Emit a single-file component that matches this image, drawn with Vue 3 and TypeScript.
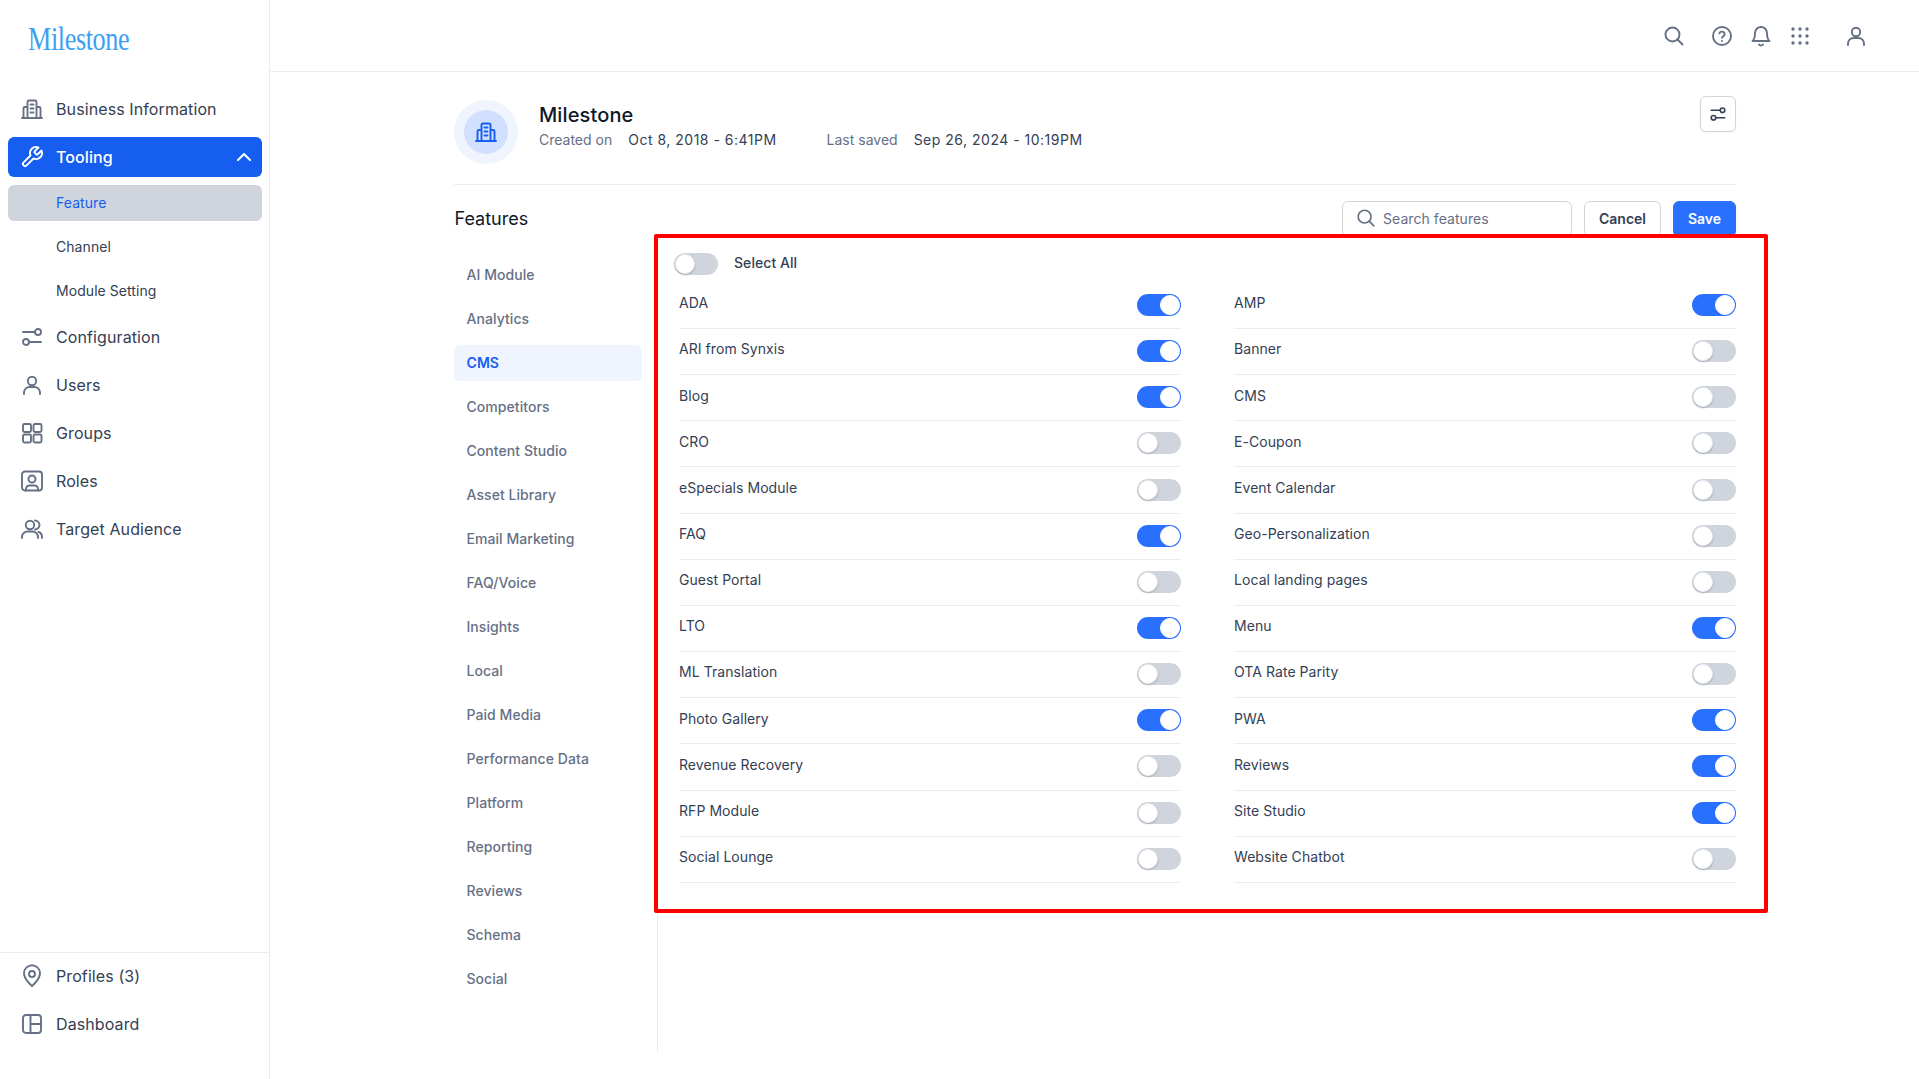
<script setup lang="ts">
import { reactive } from "vue";

const icons: Record<string, string> = {
  building:
    '<path d="M2 21h20M7.5 21V5A1.5 1.5 0 0 1 9 3.5h6A1.5 1.5 0 0 1 16.5 5v16M7.5 10H5a1.5 1.5 0 0 0-1.5 1.5V21M16.5 10H19a1.5 1.5 0 0 1 1.5 1.5V21M10.5 7.5h3M10.5 11.5h3M10.5 15.5h3"/>',
  wrench:
    '<path d="M14.7 6.3a1 1 0 0 0 0 1.4l1.6 1.6a1 1 0 0 0 1.4 0l3.77-3.77a6 6 0 0 1-7.94 7.94l-6.91 6.91a2.12 2.12 0 0 1-3-3l6.91-6.91a6 6 0 0 1 7.94-7.94l-3.76 3.76z"/>',
  sliders:
    '<circle cx="18" cy="7" r="3"/><circle cx="6" cy="17" r="3"/><path d="M3 7h12M9 17h12"/>',
  user: '<circle cx="12" cy="8" r="4.2"/><path d="M4 21v-1.5A5.5 5.5 0 0 1 9.5 14h5a5.5 5.5 0 0 1 5.5 5.5V21"/>',
  grid: '<rect x="3" y="3" width="8" height="8" rx="1.5"/><rect x="13.5" y="3" width="8" height="8" rx="1.5"/><rect x="3" y="13.5" width="8" height="8" rx="1.5"/><rect x="13.5" y="13.5" width="8" height="8" rx="1.5"/>',
  roles:
    '<rect x="2" y="2.5" width="20" height="19" rx="3"/><circle cx="12" cy="10" r="3.5"/><path d="M6 21.5V20a3.5 3.5 0 0 1 3.5-3.5h5A3.5 3.5 0 0 1 18 20v1.5"/>',
  users:
    '<circle cx="10" cy="8" r="4.2"/><path d="M2 21v-1a5.5 5.5 0 0 1 5.5-5.5h5A5.5 5.5 0 0 1 18 20v1M15 3.5a4.5 4.5 0 0 1 0 9M18.5 15a5 5 0 0 1 3.5 4.7V21"/>',
  pin: '<path d="M12 22s8-6.6 8-12.7a8 8 0 0 0-16 0C4 15.4 12 22 12 22z"/><circle cx="12" cy="10" r="3"/>',
  layout:
    '<rect x="3" y="3" width="18" height="18" rx="3"/><path d="M10.5 3v18M10.5 12H21"/>',
  search: '<circle cx="10.5" cy="10.5" r="7"/><path d="M20.5 20.5l-5-5"/>',
  help: '<circle cx="12" cy="12" r="9"/><path d="M9.4 9.3a2.7 2.7 0 0 1 5.2.9c0 1.8-2.6 2.4-2.6 3.6"/><path d="M12 17h.01"/>',
  bell: '<path d="M18 9A6 6 0 0 0 6 9c0 6-2.5 8-2.5 8h17S18 15 18 9z"/><path d="M10 20.5a2.4 2.4 0 0 0 4 0"/>',
  chevron: '<path d="M6 15l6-6 6 6"/>',
};

const topNav = [
  { label: "Business Information", icon: "building" },
  { label: "Tooling", icon: "wrench", active: true },
];
const subNav = [
  { label: "Feature", active: true },
  { label: "Channel" },
  { label: "Module Setting" },
];
const restNav = [
  { label: "Configuration", icon: "sliders" },
  { label: "Users", icon: "user" },
  { label: "Groups", icon: "grid" },
  { label: "Roles", icon: "roles" },
  { label: "Target Audience", icon: "users" },
];
const bottomNav = [
  { label: "Profiles (3)", icon: "pin" },
  { label: "Dashboard", icon: "layout" },
];

const categories = [
  "AI Module",
  "Analytics",
  "CMS",
  "Competitors",
  "Content Studio",
  "Asset Library",
  "Email Marketing",
  "FAQ/Voice",
  "Insights",
  "Local",
  "Paid Media",
  "Performance Data",
  "Platform",
  "Reporting",
  "Reviews",
  "Schema",
  "Social",
];

const features = reactive([
  { name: "ADA", on: true },
  { name: "AMP", on: true },
  { name: "ARI from Synxis", on: true },
  { name: "Banner", on: false },
  { name: "Blog", on: true },
  { name: "CMS", on: false },
  { name: "CRO", on: false },
  { name: "E-Coupon", on: false },
  { name: "eSpecials Module", on: false },
  { name: "Event Calendar", on: false },
  { name: "FAQ", on: true },
  { name: "Geo-Personalization", on: false },
  { name: "Guest Portal", on: false },
  { name: "Local landing pages", on: false },
  { name: "LTO", on: true },
  { name: "Menu", on: true },
  { name: "ML Translation", on: false },
  { name: "OTA Rate Parity", on: false },
  { name: "Photo Gallery", on: true },
  { name: "PWA", on: true },
  { name: "Revenue Recovery", on: false },
  { name: "Reviews", on: true },
  { name: "RFP Module", on: false },
  { name: "Site Studio", on: true },
  { name: "Social Lounge", on: false },
  { name: "Website Chatbot", on: false },
]);

const selectAll = reactive({ on: false });
</script>

<template>
  <div class="app">
    <aside class="sidebar">
      <div class="logo"><span>Milestone</span></div>
      <nav class="nav">
        <a v-for="item in topNav" :key="item.label" class="nav-item" :class="{ active: item.active }">
          <svg class="icon" viewBox="0 0 24 24" v-html="icons[item.icon]"></svg>
          <span>{{ item.label }}</span>
          <svg v-if="item.active" class="chevron" viewBox="0 0 24 24" v-html="icons.chevron"></svg>
        </a>
        <a v-for="item in subNav" :key="item.label" class="sub-item" :class="{ active: item.active }">{{ item.label }}</a>
        <a v-for="item in restNav" :key="item.label" class="nav-item">
          <svg class="icon" viewBox="0 0 24 24" v-html="icons[item.icon]"></svg>
          <span>{{ item.label }}</span>
        </a>
      </nav>
      <nav class="nav nav-bottom">
        <a v-for="item in bottomNav" :key="item.label" class="nav-item">
          <svg class="icon" viewBox="0 0 24 24" v-html="icons[item.icon]"></svg>
          <span>{{ item.label }}</span>
        </a>
      </nav>
    </aside>

    <div class="main">
      <header class="topbar">
        <svg class="icon" viewBox="0 0 24 24" v-html="icons.search"></svg>
        <svg class="icon" viewBox="0 0 24 24" v-html="icons.help"></svg>
        <svg class="icon" viewBox="0 0 24 24" v-html="icons.bell"></svg>
        <svg class="icon apps" viewBox="0 0 24 24">
          <template v-for="y in [5, 12, 19]" :key="y">
            <circle v-for="x in [5, 12, 19]" :key="x" :cx="x" :cy="y" r="1.7" />
          </template>
        </svg>
        <svg class="icon" viewBox="0 0 24 24" v-html="icons.user"></svg>
      </header>

      <div class="content">
        <section class="page-head">
          <div class="avatar">
            <div class="avatar-inner">
              <svg class="icon" viewBox="0 0 24 24" v-html="icons.building"></svg>
            </div>
          </div>
          <div class="head-text">
            <h1>Milestone</h1>
            <p>
              <span class="muted">Created on</span><span class="date">Oct 8, 2018 - 6:41PM</span>
              <span class="muted saved">Last saved</span><span class="date">Sep 26, 2024 - 10:19PM</span>
            </p>
          </div>
          <button class="settings">
            <svg viewBox="0 0 24 24" v-html="icons.sliders"></svg>
          </button>
        </section>

        <section class="toolbar">
          <h2>Features</h2>
          <label class="search">
            <svg class="icon" viewBox="0 0 24 24" v-html="icons.search"></svg>
            <input type="text" placeholder="Search features" />
          </label>
          <button class="btn cancel">Cancel</button>
          <button class="btn primary">Save</button>
        </section>

        <section class="body">
          <ul class="categories">
            <li v-for="c in categories" :key="c" :class="{ active: c === 'CMS' }">{{ c }}</li>
          </ul>
          <div class="panel">
            <div class="select-all">
              <button class="toggle" :class="{ on: selectAll.on }" @click="selectAll.on = !selectAll.on"></button>
              <span>Select All</span>
            </div>
            <div class="feature-grid">
              <div v-for="f in features" :key="f.name" class="feature-row">
                <span>{{ f.name }}</span>
                <button class="toggle" :class="{ on: f.on }" @click="f.on = !f.on"></button>
              </div>
            </div>
          </div>
          <div class="highlight"></div>
        </section>
      </div>
    </div>
  </div>
</template>

<style>
html,
body {
  margin: 0;
  background: #fff;
}
</style>

<style scoped>
.app {
  display: flex;
  height: 1079px;
  overflow: hidden;
  font-family: Inter, "Noto Sans", sans-serif;
  color: #344054;
  background: #fff;
}

.icon {
  width: 24px;
  height: 24px;
  flex: none;
  fill: none;
  stroke: #667085;
  stroke-width: 1.9;
  stroke-linecap: round;
  stroke-linejoin: round;
}

.sidebar {
  width: 270px;
  flex: none;
  box-sizing: border-box;
  border-right: 1px solid #eaecf0;
  display: flex;
  flex-direction: column;
}

.logo {
  height: 89px;
  padding: 19px 0 0 28px;
  box-sizing: border-box;
  overflow: hidden;
}

.logo span {
  display: inline-block;
  font-family: "Liberation Serif", serif;
  font-size: 34px;
  line-height: 40px;
  color: #3d9fef;
  transform: scaleX(0.77);
  transform-origin: left center;
  letter-spacing: -0.5px;
}

.nav {
  display: flex;
  flex-direction: column;
  gap: 8px;
  padding: 0 7px 0 8px;
}

.nav-bottom {
  margin-top: auto;
  border-top: 1px solid #eaecf0;
  padding-top: 3px;
  padding-bottom: 35px;
}

.nav-item {
  height: 40px;
  display: flex;
  align-items: center;
  gap: 12px;
  padding: 0 12px;
  border-radius: 6px;
  font-size: 16px;
  letter-spacing: 0.1px;
}

.nav-item.active {
  background: #155eef;
  color: #fff;
  font-weight: 500;
}

.nav-item.active .icon {
  stroke: #fff;
}

.chevron {
  width: 24px;
  height: 24px;
  margin-left: auto;
  margin-right: -6px;
  fill: none;
  stroke: #fff;
  stroke-width: 2;
  stroke-linecap: round;
  stroke-linejoin: round;
}

.sub-item {
  height: 36px;
  line-height: 36px;
  padding-left: 48px;
  border-radius: 6px;
  font-size: 14px;
  letter-spacing: 0.06px;
}

.sub-item.active {
  background: #d0d5dd;
  color: #155eef;
}

.main {
  flex: 1;
  min-width: 0;
}

.topbar {
  height: 72px;
  box-sizing: border-box;
  border-bottom: 1px solid #eaecf0;
  display: flex;
  align-items: center;
  justify-content: flex-end;
  gap: 15px;
  padding-right: 51px;
}

.topbar .icon:nth-child(1) {
  margin-right: 9px;
}

.topbar .icon:nth-child(4) {
  margin-right: 17px;
}

.apps {
  stroke: none;
  fill: #667085;
}

.content {
  padding: 28px 183px 0 184px;
}

.page-head {
  display: flex;
  align-items: flex-start;
  padding-bottom: 20px;
  border-bottom: 1px solid #eaecf0;
}

.avatar {
  width: 64px;
  height: 64px;
  border-radius: 50%;
  background: #eff4ff;
  display: flex;
  align-items: center;
  justify-content: center;
}

.avatar-inner {
  width: 44px;
  height: 44px;
  border-radius: 50%;
  background: #d1e0ff;
  display: flex;
  align-items: center;
  justify-content: center;
}

.avatar-inner .icon {
  stroke: #155eef;
}

.head-text {
  margin-left: 21px;
  padding-top: 2px;
}

.head-text h1 {
  margin: 0;
  font-size: 20px;
  line-height: 26px;
  font-weight: 500;
  letter-spacing: 0.12px;
  color: #101828;
}

.head-text p {
  margin: 2px 0 0;
  font-size: 14px;
  line-height: 20px;
}

.muted {
  color: #667085;
}

.date {
  margin-left: 16px;
  letter-spacing: 0.5px;
}

.saved {
  margin-left: 50px;
}

.settings {
  margin-left: auto;
  margin-top: -4px;
  width: 36px;
  height: 36px;
  padding: 8px;
  box-sizing: border-box;
  border: 1px solid #d0d5dd;
  border-radius: 6px;
  background: #fff;
  box-shadow: 0 1px 2px rgba(16, 24, 40, 0.05);
}

.settings svg {
  display: block;
  width: 18px;
  height: 18px;
  fill: none;
  stroke: #344054;
  stroke-width: 2.2;
  stroke-linecap: round;
}

.toolbar {
  display: flex;
  align-items: center;
  gap: 12px;
  margin-top: 16px;
}

.toolbar h2 {
  margin: -2px auto 0 0.5px;
  font-size: 18px;
  font-weight: 400;
  color: #101828;
}

.search {
  width: 230px;
  height: 36px;
  box-sizing: border-box;
  display: flex;
  align-items: center;
  gap: 6px;
  padding: 0 12px 2px;
  border: 1px solid #d0d5dd;
  border-radius: 6px;
}

.search .icon {
  width: 22px;
  height: 22px;
  stroke-width: 1.8;
}

.search input {
  flex: 1;
  min-width: 0;
  border: 0;
  outline: 0;
  padding: 0;
  font: 14px Inter, sans-serif;
  letter-spacing: 0.06px;
  color: #344054;
  background: transparent;
}

.search input::placeholder {
  color: #667085;
  opacity: 1;
}

.btn {
  height: 36px;
  padding: 0 0 2px;
  box-sizing: border-box;
  border: 1px solid #d0d5dd;
  border-radius: 6px;
  background: #fff;
  font: 600 14px Inter, sans-serif;
  color: #344054;
}

.cancel {
  width: 77px;
}

.btn.primary {
  width: 63px;
  background: #2970ff;
  border-color: #2970ff;
  color: #fff;
}

.body {
  position: relative;
  display: flex;
  margin-top: 16px;
}

.categories {
  list-style: none;
  margin: 0;
  width: 204px;
  box-sizing: border-box;
  padding: 4px 15px 56px 0;
  border-right: 1px solid #eaecf0;
  display: flex;
  flex-direction: column;
  gap: 8px;
}

.categories li {
  height: 36px;
  line-height: 36px;
  padding-left: 12.5px;
  border-radius: 6px;
  font-size: 14px;
  font-weight: 500;
  letter-spacing: 0.06px;
  color: #667085;
}

.categories li.active {
  background: #eff4ff;
  color: #155eef;
  font-weight: 600;
}

.panel {
  flex: 1;
  padding-left: 16px;
}

.select-all {
  display: flex;
  align-items: center;
  gap: 16px;
  height: 22px;
  margin-bottom: 7.8px;
  font-size: 14px;
  font-weight: 500;
  letter-spacing: 0.06px;
}

.select-all span {
  margin-top: -3px;
}

.feature-grid {
  display: grid;
  grid-template-columns: 502px 502px;
  column-gap: 53px;
  margin-left: 5px;
}

.feature-row {
  height: 46.17px;
  box-sizing: border-box;
  display: flex;
  justify-content: space-between;
  align-items: flex-start;
  padding-top: 10.4px;
  border-bottom: 1px solid #eaecf0;
  font-size: 14px;
  line-height: 20px;
  letter-spacing: 0.06px;
}

.toggle {
  position: relative;
  flex: none;
  width: 44px;
  height: 22px;
  margin: 0;
  padding: 0;
  border: 0;
  border-radius: 11px;
  background: #d0d5dd;
  cursor: pointer;
}

.feature-row .toggle {
  margin-top: 0.7px;
}

.toggle::after {
  content: "";
  position: absolute;
  top: 1px;
  left: 1px;
  width: 20px;
  height: 20px;
  box-sizing: border-box;
  border-radius: 50%;
  background: #fff;
  border: 1px solid #eaecf0;
  box-shadow: 0 1px 2px rgba(16, 24, 40, 0.25);
}

.toggle.on {
  background: #2970ff;
}

.toggle.on::after {
  left: 23px;
  border-color: #fff;
  box-shadow: none;
}

.highlight {
  position: absolute;
  left: 200px;
  right: -32px;
  top: -19px;
  bottom: 140px;
  border: 4px solid #ff0000;
  border-radius: 2px;
  pointer-events: none;
}
</style>
